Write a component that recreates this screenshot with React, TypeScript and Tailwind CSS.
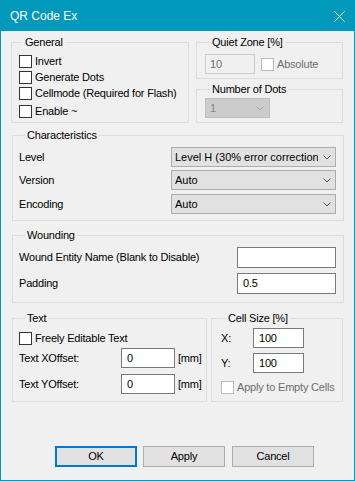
import type { ReactNode } from 'react';

// Windows-style dialog: QR Code Ex settings

const Chevron = ({ color = '#606060' }: { color?: string }) => (
    <svg width="8" height="5" viewBox="0 0 8 5" className="shrink-0">
        <path d="M0.5 0.5 L4 4 L7.5 0.5" fill="none" stroke={color} strokeWidth="1" />
    </svg>
);

const Group = ({ title, className, legend = 'ml-[5px]', children }: { title: string; className: string; legend?: string; children: ReactNode }) => (
    <fieldset className={`min-w-0 border border-[#dcdcdc] ${className}`}>
        <legend className={`px-[2px] leading-[15px] ${legend}`}>{title}</legend>
        {children}
    </fieldset>
);

const Check = ({ label, disabled = false, className = '' }: { label: string; disabled?: boolean; className?: string }) => (
    <div className={`flex items-center h-[13px] gap-[3px] ${className}`}>
        <span className={`w-[13px] h-[13px] shrink-0 border bg-white ${disabled ? 'border-[#bcbcbc]' : 'border-[#333333]'}`} />
        <span className={`leading-[13px] whitespace-nowrap ${disabled ? 'text-[#6d6d6d]' : ''}`}>{label}</span>
    </div>
);

const Combo = ({ value }: { value: string }) => (
    <div className="w-[165px] h-[20px] bg-[#e1e1e1] border border-[#adadad] flex items-center pl-[3px] pr-[4px]">
        <span className="flex-1 overflow-hidden whitespace-nowrap leading-[18px] tracking-normal">{value}</span>
        <span className="ml-[5px]"><Chevron /></span>
    </div>
);

const Edit = ({ value = '', className }: { value?: string; className: string }) => (
    <div className={`bg-white border border-[#7a7a7a] flex items-center pl-[5px] ${className}`}>{value}</div>
);

const Button = ({ label, primary = false, className = '' }: { label: string; primary?: boolean; className?: string }) => (
    <div className={`w-[82px] h-[21px] bg-[#e1e1e1] flex items-center justify-center ${primary ? 'border-2 border-[#0078d7]' : 'border border-[#adadad]'} ${className}`}>
        {label}
    </div>
);

const App = () => {
    return (
        <div className="w-[355px] h-[481px] border border-[#0099bc] bg-[#f0f0f0] flex flex-col font-['Liberation_Sans',Arial,sans-serif] text-[11px] tracking-[-0.2px] text-black">
            <div className="h-[30px] bg-[#0099bc] flex items-center justify-between pl-[9px] pr-[9px] text-white text-[12px] tracking-normal">
                <span>QR Code Ex</span>
                <svg width="11" height="11" viewBox="0 0 11 11">
                    <path d="M0.5 0.5 L10.5 10.5 M10.5 0.5 L0.5 10.5" stroke="#ffffff" strokeWidth="1" />
                </svg>
            </div>

            <div className="flex flex-col pt-[4px] px-[10px]">
                <div className="flex gap-[7px]">
                    <Group title="General" legend="ml-[4px]" className="w-[178px] h-[88px] pl-[7px]">
                        <Check label="Invert" className="mt-[5px]" />
                        <Check label="Generate Dots" className="mt-[3px]" />
                        <Check label="Cellmode (Required for Flash)" className="mt-[3px]" />
                        <Check label="Enable ~" className="mt-[5px]" />
                    </Group>
                    <div className="flex flex-col w-[147px]">
                        <Group title="Quiet Zone [%]" className="h-[44px] pl-[8px]">
                            <div className="flex items-center mt-[4px]">
                                <div className="w-[50px] h-[20px] border border-[#cccccc] bg-[#f0f0f0] text-[#6d6d6d] flex items-center pl-[4px]">10</div>
                                <Check label="Absolute" disabled className="ml-[6px]" />
                            </div>
                        </Group>
                        <Group title="Number of Dots" className="h-[41px] mt-[3px] pl-[8px]">
                            <div className="mt-[1px] w-[65px] h-[20px] bg-[#cccccc] border border-[#bfbfbf] text-[#838383] flex items-center justify-between pl-[4px] pr-[5px]">
                                <span>1</span>
                                <Chevron color="#a8a8a8" />
                            </div>
                        </Group>
                    </div>
                </div>

                <Group title="Characteristics" legend="ml-[6px]" className="ml-[1px] mt-[5px] w-[332px] h-[93px] pl-[6px] pr-[7px]">
                    <div className="flex items-center justify-between mt-[4px]">
                        <span>Level</span>
                        <Combo value="Level H (30% error correction)" />
                    </div>
                    <div className="flex items-center justify-between mt-[3px]">
                        <span>Version</span>
                        <Combo value="Auto" />
                    </div>
                    <div className="flex items-center justify-between mt-[4px]">
                        <span>Encoding</span>
                        <Combo value="Auto" />
                    </div>
                </Group>

                <Group title="Wounding" legend="ml-[6px]" className="ml-[1px] mt-[7px] w-[332px] h-[75px] pl-[6px] pr-[7px]">
                    <div className="flex items-center justify-between mt-[4px]">
                        <span>Wound Entity Name (Blank to Disable)</span>
                        <Edit className="w-[99px] h-[21px]" />
                    </div>
                    <div className="flex items-center justify-between mt-[5px]">
                        <span>Padding</span>
                        <Edit value="0.5" className="w-[99px] h-[21px]" />
                    </div>
                </Group>

                <div className="flex gap-[4px] ml-[1px] mt-[8px]">
                    <Group title="Text" legend="ml-[6px]" className="w-[195px] h-[91px] pl-[6px]">
                        <Check label="Freely Editable Text" className="mt-[6px]" />
                        <div className="flex items-center mt-[3px]">
                            <span className="w-[102px]">Text XOffset:</span>
                            <Edit value="0" className="w-[54px] h-[20px]" />
                            <span className="ml-[3px]">[mm]</span>
                        </div>
                        <div className="flex items-center mt-[6px]">
                            <span className="w-[102px]">Text YOffset:</span>
                            <Edit value="0" className="w-[54px] h-[20px]" />
                            <span className="ml-[3px]">[mm]</span>
                        </div>
                    </Group>
                    <Group title="Cell Size [%]" className="w-[132px] h-[91px] pl-[9px]">
                        <div className="flex items-center mt-[2px]">
                            <span className="w-[32px]">X:</span>
                            <Edit value="100" className="w-[51px] h-[20px]" />
                        </div>
                        <div className="flex items-center mt-[5px]">
                            <span className="w-[32px]">Y:</span>
                            <Edit value="100" className="w-[51px] h-[20px]" />
                        </div>
                        <Check label="Apply to Empty Cells" disabled className="mt-[8px]" />
                    </Group>
                </div>

                <div className="flex ml-[44px] mt-[44px]">
                    <Button label="OK" primary />
                    <Button label="Apply" className="ml-[6px]" />
                    <Button label="Cancel" className="ml-[7px]" />
                </div>
            </div>
        </div>
    );
};

export default App;
